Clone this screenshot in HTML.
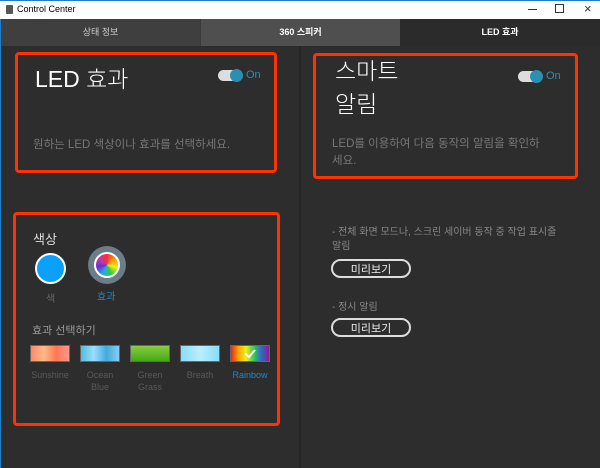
<!DOCTYPE html>
<html><head><meta charset="utf-8"><style>
*{margin:0;padding:0;box-sizing:border-box}
body{width:600px;height:468px;overflow:hidden;background:#2d2d2d;font-family:"Liberation Sans","Noto Sans CJK KR",sans-serif;position:relative}
.a{position:absolute;white-space:nowrap}
.box{position:absolute;border:3px solid #ff3300;border-radius:4px}
.tog{position:absolute;width:24px;height:11px;border-radius:6px;background:#ddd}
.tog::after{content:"";position:absolute;right:-1px;top:-1px;width:13px;height:13px;border-radius:50%;background:#2a8fb0}
.on{position:absolute;color:#2a8fb0;font-size:11px}
.btn{position:absolute;width:80px;height:19px;border:2px solid #ddd;border-radius:10px;color:#eee;font-size:11px;display:flex;align-items:center;justify-content:center}
.th{position:absolute;top:345px;width:40px;height:17px;border:1px solid #666}
.lb{position:absolute;top:368px;width:50px;text-align:center;color:#5a5a5a;font-size:9px;line-height:12px}
</style></head><body>
<div class="a" style="left:0;top:0;width:600px;height:19px;background:#fff;border-top:1px solid #1a7fd0"></div>
<div class="a" style="left:6px;top:5px;width:7px;height:9px;background:#555;border-radius:1px"></div>
<div class="a" style="left:17px;top:4px;font-size:9px;color:#000">Control Center</div>
<div class="a" style="left:528px;top:9px;width:9px;height:1px;background:#333"></div>
<div class="a" style="left:555px;top:4px;width:9px;height:9px;border:1px solid #333"></div>
<div class="a" style="left:584px;top:1px;font-size:13px;color:#333">×</div>
<div class="a" style="left:0;top:19px;width:1px;height:449px;background:#1a7fd0"></div>
<div class="a" style="left:1px;top:19px;width:199px;height:27px;background:#3f3f3f;color:#ccc;font-size:9px;text-align:center;line-height:26px">상태 정보</div>
<div class="a" style="left:200px;top:19px;width:200px;height:27px;background:#4f4f4f;color:#fff;font-size:9px;font-weight:bold;text-align:center;line-height:26px;border-left:1px solid #3a3a3a">360 스피커</div>
<div class="a" style="left:400px;top:19px;width:200px;height:27px;background:#2b2b2b;color:#fff;font-size:9px;font-weight:bold;text-align:center;line-height:26px">LED 효과</div>
<div class="a" style="left:299px;top:46px;width:2px;height:422px;background:#262626"></div>

<div class="box" style="left:15px;top:52px;width:262px;height:121px"></div>
<div class="a" style="left:35px;top:60px;font-size:23px;color:#fff;font-weight:300">LED 효과</div>
<div class="tog" style="left:218px;top:70px"></div><div class="on" style="left:246px;top:69px">On</div>
<div class="a" style="left:33px;top:136px;font-size:11.5px;color:#777">원하는 LED 색상이나 효과를 선택하세요.</div>

<div class="box" style="left:13px;top:212px;width:267px;height:214px"></div>
<div class="a" style="left:33px;top:229px;font-size:13px;color:#ddd">색상</div>
<div class="a" style="left:35px;top:253px;width:31px;height:31px;border-radius:50%;background:#0aa0ff;border:2px solid #fff"></div>
<div class="a" style="left:88px;top:246px;width:38px;height:38px;border-radius:50%;background:#6c7c88"></div>
<div class="a" style="left:94px;top:252px;width:26px;height:26px;border-radius:50%;border:2px solid #fff;background:conic-gradient(#e33,#f90,#ee2,#3c3,#2ae,#63c,#c3a,#e33)"></div>
<div class="a" style="left:46px;top:290px;font-size:10px;color:#666">색</div>
<div class="a" style="left:97px;top:288px;font-size:10px;color:#1e88c8">효과</div>
<div class="a" style="left:32px;top:322px;font-size:11px;color:#999">효과 선택하기</div>
<div class="th" style="left:30px;background:linear-gradient(90deg,#f86,#fb8,#f75,#f98)"></div>
<div class="th" style="left:80px;background:linear-gradient(90deg,#5bd,#9df,#4ad,#8ce)"></div>
<div class="th" style="left:130px;background:linear-gradient(180deg,#8c4,#4a1)"></div>
<div class="th" style="left:180px;background:linear-gradient(90deg,#8df,#bef,#8df)"></div>
<div class="th" style="left:230px;background:linear-gradient(90deg,#e22,#fa0,#ee2,#3c5,#36c,#828)"><svg style="position:absolute;left:12px;top:2px" width="14" height="11"><path d="M2 5.5L6 9L12 2" stroke="#fff" stroke-width="2" fill="none"/></svg></div>
<div class="lb" style="left:25px;top:369px">Sunshine</div>
<div class="lb" style="left:75px;top:369px">Ocean<br>Blue</div>
<div class="lb" style="left:125px;top:369px">Green<br>Grass</div>
<div class="lb" style="left:175px;top:369px">Breath</div>
<div class="lb" style="left:225px;top:369px;color:#1e88c8">Rainbow</div>

<div class="box" style="left:313px;top:53px;width:265px;height:126px"></div>
<div class="a" style="left:335px;top:55px;font-size:23px;color:#fff;font-weight:300;line-height:33px">스마트<br>알림</div>
<div class="tog" style="left:518px;top:71px"></div><div class="on" style="left:546px;top:70px">On</div>
<div class="a" style="left:332px;top:136px;font-size:11.5px;color:#777;line-height:17px">LED를 이용하여 다음 동작의 알림을 확인하<br>세요.</div>
<div class="a" style="left:332px;top:226px;font-size:10px;color:#888;line-height:14px">- 전체 화면 모드나, 스크린 세이버 동작 중 작업 표시줄<br>알림</div>
<div class="btn" style="left:331px;top:259px">미리보기</div>
<div class="a" style="left:332px;top:298px;font-size:10px;color:#888">- 정시 알림</div>
<div class="btn" style="left:331px;top:318px">미리보기</div>
</body></html>
